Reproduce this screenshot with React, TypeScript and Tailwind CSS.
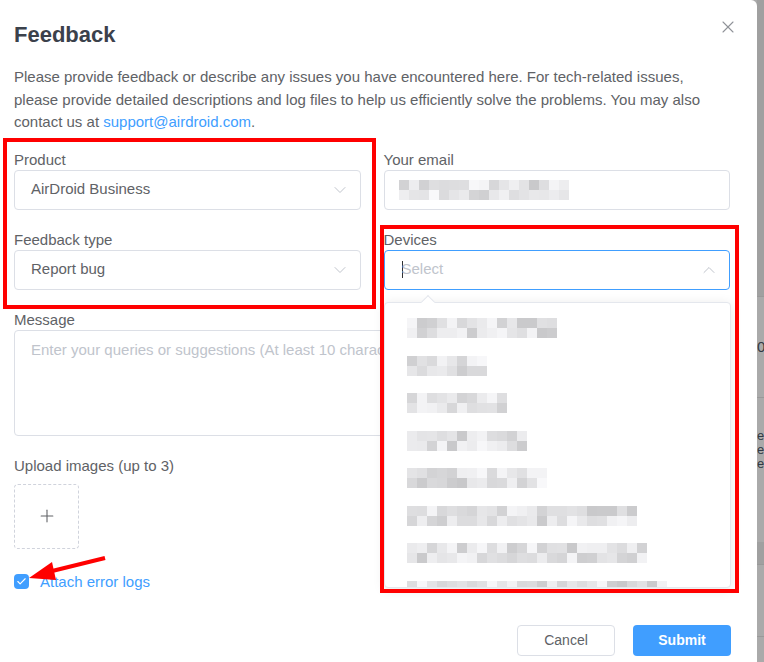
import { X, ChevronDown, ChevronUp, Plus, Check } from 'lucide-react';

const font = { fontFamily: '"Liberation Sans", Arial, sans-serif' };

// blurred device names, widths in px
const devices = [143, 72, 92, 113, 133, 225, 235, 255];

function shade(seed: number) {
  const x = Math.sin(seed * 12.9898) * 43758.5453;
  const r = x - Math.floor(x);
  const v = Math.round(200 + r * 48);
  return `rgb(${v},${v},${v + 2})`;
}

function Pixels({ width, seed }: { width: number; seed: number }) {
  const cols = Math.ceil(width / 10);
  return (
    <div className="flex flex-col">
      {[0, 1].map((row) => (
        <div key={row} className="flex h-[10px]">
          {Array.from({ length: cols }).map((_, i) => (
            <div key={i} className="h-[10px] w-[10px]" style={{ background: shade(seed * 100 + row * 37 + i + 1) }} />
          ))}
        </div>
      ))}
    </div>
  );
}

function Select({ value, placeholder }: { value?: string; placeholder?: string }) {
  return (
    <div className="flex h-10 items-center justify-between rounded border border-[#dcdfe6] pl-4 pr-[10px]">
      {value ? (
        <span className="text-[15px] text-[#606266]">{value}</span>
      ) : (
        <span className="text-[15px] text-[#c0c4cc]">{placeholder}</span>
      )}
      <ChevronDown className="h-5 w-5 text-[#c0c4cc]" strokeWidth={1.2} />
    </div>
  );
}

export default function App() {
  return (
    <div className="relative flex h-[662px] w-[764px] overflow-hidden bg-[#aaaaaa]" style={font}>
      {/* Dialog */}
      <div className="relative flex w-[757px] shrink-0 flex-col rounded-tr-md bg-white px-[14px] pt-[21px]">
        <div className="flex items-start justify-between pr-[5px]">
          <h1 className="text-[22px] font-bold leading-7 text-[#3b414b]">Feedback</h1>
          <X className="mt-[-4px] h-5 w-5 text-[#909399]" strokeWidth={1.3} />
        </div>

        <p className="mt-[17px] pr-[20px] text-[15px] leading-[22.5px] text-[#606266]">
          Please provide feedback or describe any issues you have encountered here. For tech-related issues, please provide detailed descriptions and log files to help us efficiently solve the problems. You may also contact us at <a className="text-[#409eff]">support@airdroid.com</a>.
        </p>

        <div className="mt-[16px] grid w-[716px] grid-cols-2 gap-x-[23px]">
          <div>
            <div className="text-[15px] leading-5 text-[#606266]">Product</div>
            <Select value="AirDroid Business" />
            <div className="mt-[20px] text-[15px] leading-5 text-[#606266]">Feedback type</div>
            <Select value="Report bug" />
          </div>
          <div>
            <div className="text-[15px] leading-5 text-[#606266]">Your email</div>
            <div className="flex h-10 items-center rounded border border-[#dcdfe6] pl-[14px]">
              <Pixels width={168} seed={9} />
            </div>
            <div className="mt-[20px] text-[15px] leading-5 text-[#606266]">Devices</div>
            <div className="flex h-10 items-center justify-between rounded border border-[#409eff] pl-[17px] pr-[10px]">
              <span className="flex items-center text-[15px] text-[#c0c4cc]">
                <span className="mr-[-1px] inline-block h-[17px] w-px bg-[#303133]" />
                Select
              </span>
              <ChevronUp className="h-5 w-5 text-[#c0c4cc]" strokeWidth={1.2} />
            </div>
          </div>
        </div>

        <div className="mt-[20px] w-[716px]">
          <div className="text-[15px] leading-5 text-[#606266]">Message</div>
          <div className="h-[106px] rounded border border-[#dcdfe6] px-4 pt-[8px] text-[15px] text-[#c0c4cc]">
            Enter your queries or suggestions (At least 10 characters)
          </div>
        </div>

        <div className="mt-[20px] text-[15px] leading-5 text-[#606266]">Upload images (up to 3)</div>
        <div className="mt-[8px] flex h-[65px] w-[65px] items-center justify-center rounded border border-dashed border-[#d0d3dc]">
          <Plus className="h-5 w-5 text-[#606266]" strokeWidth={1.3} />
        </div>

        <div className="mt-[22px] flex items-center gap-[11px]">
          <div className="flex h-[15px] w-[15px] items-center justify-center rounded-sm bg-[#409eff]">
            <Check className="h-[11px] w-[11px] text-white" strokeWidth={2.5} />
          </div>
          <span className="text-[15px] text-[#409eff]">Attach error logs</span>
        </div>

        <div className="mt-[32px] flex justify-end gap-[18px] pr-[12px]">
          <button className="h-[31px] w-[98px] rounded border border-[#dcdfe6] bg-white text-[14px] text-[#606266]">Cancel</button>
          <button className="h-[31px] w-[98px] rounded bg-[#409eff] text-[14px] font-bold text-white">Submit</button>
        </div>

        {/* Devices dropdown */}
        <div className="absolute left-[384px] top-[302px] h-[286px] w-[347px] overflow-hidden rounded border border-[#e4e7ed] bg-white shadow-[0_2px_12px_rgba(0,0,0,0.1)]">
          <div className="flex flex-col gap-[17.5px] pl-[22px] pt-[15px]">
            {devices.map((w, i) => (
              <Pixels key={i} width={w} seed={i + 1} />
            ))}
          </div>
        </div>
        <div className="absolute left-[423px] top-[297px] h-[10px] w-[10px] rotate-45 border-l border-t border-[#e4e7ed] bg-white" />
      </div>

      {/* Background page strip */}
      <div className="flex flex-1 flex-col overflow-hidden whitespace-nowrap text-[#333a44]">
        <div className="h-[297px] border-b border-[#999999] bg-[#a0a0a0]" />
        <div className="h-[101px] border-b border-[#999999] pt-[40px] text-[15px] leading-5">0</div>
        <div className="h-[144px] pt-[31px] text-[13px] leading-[14px]">
          e<br />e<br />e
        </div>
        <div className="h-[23px] border-b border-[#999999] bg-[#a0a0a0]" />
        <div className="h-[72px] border-b border-[#999999]" />
      </div>

      {/* Annotations */}
      <div className="pointer-events-none absolute left-[3px] top-[138px] h-[171px] w-[373px] border-4 border-[#ff0000]" />
      <div className="pointer-events-none absolute left-[380px] top-[225px] h-[368px] w-[359px] border-4 border-[#ff0000]" />
      <svg className="pointer-events-none absolute left-0 top-0" width="764" height="662">
        <line x1="105" y1="558" x2="44" y2="573" stroke="#ff0000" strokeWidth="4" />
        <polygon points="29,578 52,562 56,580" fill="#ff0000" />
      </svg>
    </div>
  );
}
